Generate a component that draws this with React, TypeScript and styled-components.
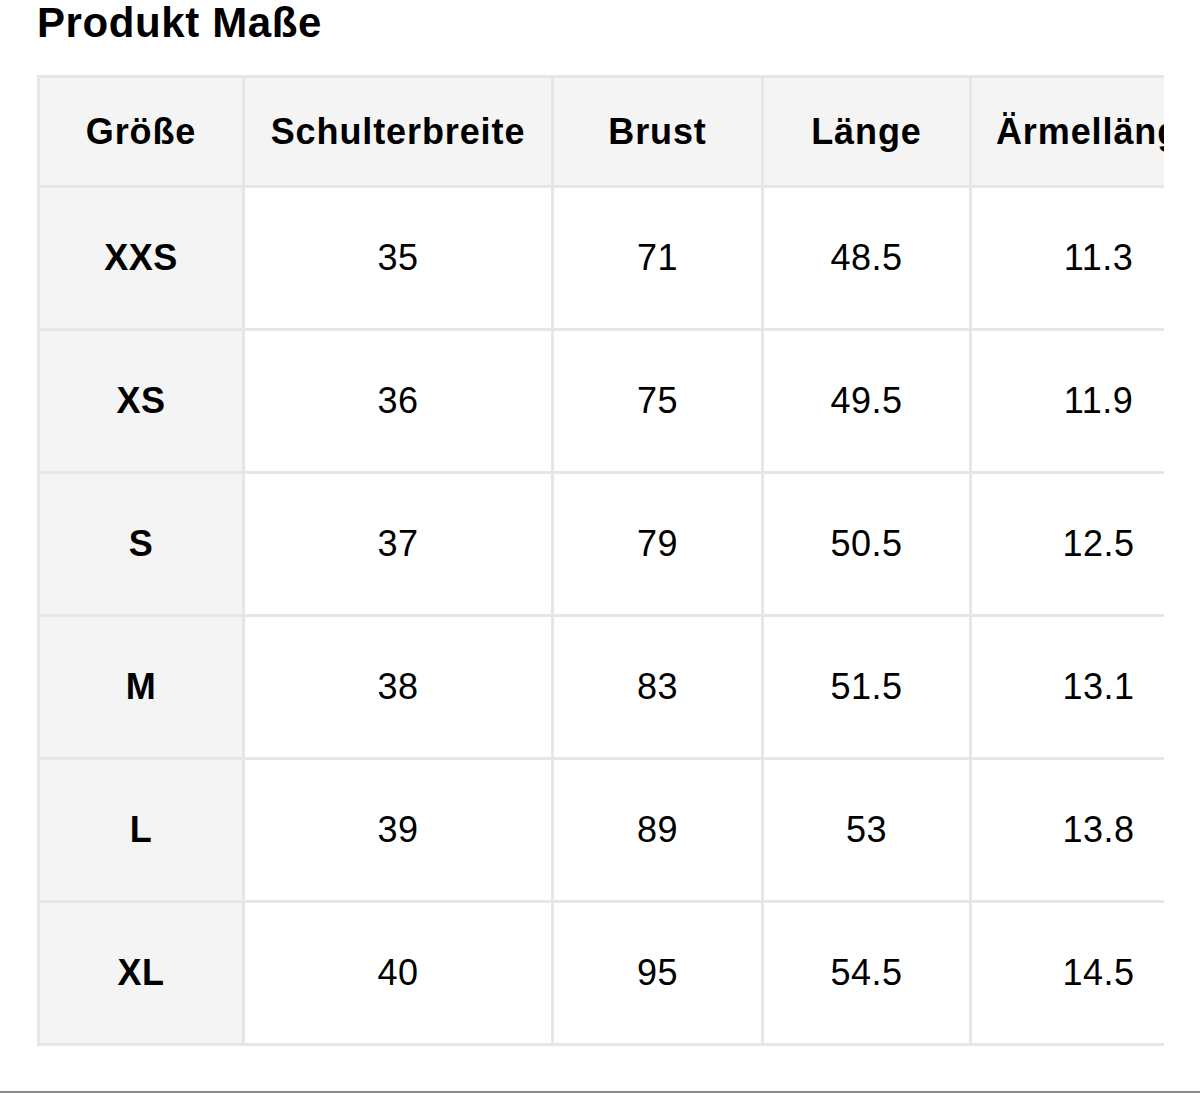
import React from 'react'
import { styled, createGlobalStyle } from 'styled-components'

const GlobalStyle = createGlobalStyle`
    html, body {
        margin: 0;
        padding: 0;
        background: #ffffff;
        font-family: "Liberation Sans", Arial, sans-serif;
        color: #000;
    }
`;

const columns = ['Größe', 'Schulterbreite', 'Brust', 'Länge', 'Ärmellänge']
const widths = [205, 309, 210, 208, 256]

const rows = [
    ['XXS', '35', '71', '48.5', '11.3'],
    ['XS', '36', '75', '49.5', '11.9'],
    ['S', '37', '79', '50.5', '12.5'],
    ['M', '38', '83', '51.5', '13.1'],
    ['L', '39', '89', '53', '13.8'],
    ['XL', '40', '95', '54.5', '14.5'],
]

const App = () => {
    return (
        <>
            <GlobalStyle />
            <Page>
                <Title>Produkt Maße</Title>
                <TableScroll>
                    <SizeTable>
                        <colgroup>
                            {widths.map((w, i) => <col key={i} style={{ width: w }} />)}
                        </colgroup>
                        <thead>
                            <HeadRow>
                                {columns.map(c => <HeadCell key={c}>{c}</HeadCell>)}
                            </HeadRow>
                        </thead>
                        <tbody>
                            {rows.map(r => (
                                <BodyRow key={r[0]}>
                                    {r.map((v, i) => (
                                        <Cell key={i} $label={i === 0}>{v}</Cell>
                                    ))}
                                </BodyRow>
                            ))}
                        </tbody>
                    </SizeTable>
                </TableScroll>
            </Page>
            <BottomLine />
        </>
    )
}

const Page = styled.div`
    padding-left: 37px;
    height: 1091px;
`;

const Title = styled.h1`
    margin: 0 0 29px 0;
    font-size: 42px;
    line-height: 46px;
    font-weight: 700;
    letter-spacing: 0.6px;
`;

const TableScroll = styled.div`
    width: 1127px;
    overflow: hidden;
`;

const SizeTable = styled.table`
    border-collapse: collapse;
    table-layout: fixed;
    width: 1188px;
    border: 3px solid #e6e6e6;
    border-right: none;
`;

const HeadRow = styled.tr`
    height: 110px;
    background: #f4f4f4;
`;

const HeadCell = styled.th`
    border: 3px solid #e6e6e6;
    font-size: 36px;
    font-weight: 700;
    letter-spacing: 0.9px;
    text-align: center;
    white-space: nowrap;
    overflow: hidden;
    padding: 0;
`;

const BodyRow = styled.tr`
    height: 143px;
`;

const Cell = styled.td<{ $label?: boolean }>`
    border: 3px solid #e6e6e6;
    text-align: center;
    font-size: 36px;
    letter-spacing: 0.5px;
    padding: 0;
    font-weight: ${p => (p.$label ? 700 : 400)};
    background: ${p => (p.$label ? '#f4f4f4' : '#ffffff')};
`;

const BottomLine = styled.div`
    height: 2px;
    background: #8c8c8c;
`;

export default App
